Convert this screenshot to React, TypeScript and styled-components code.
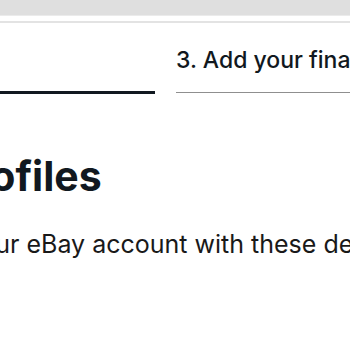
import React from 'react';
import styled, { createGlobalStyle } from 'styled-components';

const GlobalStyle = createGlobalStyle`
  html, body {
    margin: 0;
    padding: 0;
    background: #ffffff;
  }
  body {
    font-family: Inter, "Open Sans", Arial, sans-serif;
    color: #191919;
    overflow: hidden;
  }
`;

const Page = styled.div`
  width: 350px;
  height: 350px;
  overflow: hidden;
  display: flex;
  flex-direction: column;
`;

const BrowserBar = styled.div`
  height: 15px;
  background: #dfdfdf;
  border-bottom: 1px solid #ebebeb;
`;

const Divider = styled.div`
  margin-top: 5px;
  height: 2px;
  background: #e3e3e3;
`;

// the page is scrolled a little to the right, so the start of each line is hidden
const Content = styled.div`
  margin-left: -52px;
  display: flex;
  flex-direction: column;
`;

const Steps = styled.div`
  display: flex;
  align-items: flex-start;
  gap: 21px;
  padding-top: 23px;
`;

const Step = styled.div<{ $active?: boolean; $width: number }>`
  flex: 0 0 ${(p) => p.$width}px;
  height: ${(p) => (p.$active ? 48 : 47)}px;
  box-sizing: border-box;
  font-size: 23px;
  font-weight: 500;
  line-height: 28px;
  white-space: nowrap;
  color: #111820;
  border-bottom: ${(p) => (p.$active ? '3px solid #111820' : '1px solid #8f8f8f')};
`;

const Heading = styled.h1`
  margin: 58px 0 0;
  font-size: 41px;
  font-weight: 700;
  line-height: 48px;
  color: #111820;
  white-space: nowrap;
`;

const Subtitle = styled.p`
  margin: 29px 0 0 -37px;
  font-size: 25px;
  font-weight: 400;
  line-height: 30px;
  color: #191919;
  white-space: nowrap;
`;

export default function App() {
  return (
    <Page>
      <GlobalStyle />
      <BrowserBar />
      <Divider />
      <Content>
        <Steps>
          <Step $active $width={207}></Step>
          <Step $width={420}>3. Add your final details</Step>
        </Steps>
        <Heading>Profiles</Heading>
        <Subtitle>Link your eBay account with these details</Subtitle>
      </Content>
    </Page>
  );
}
